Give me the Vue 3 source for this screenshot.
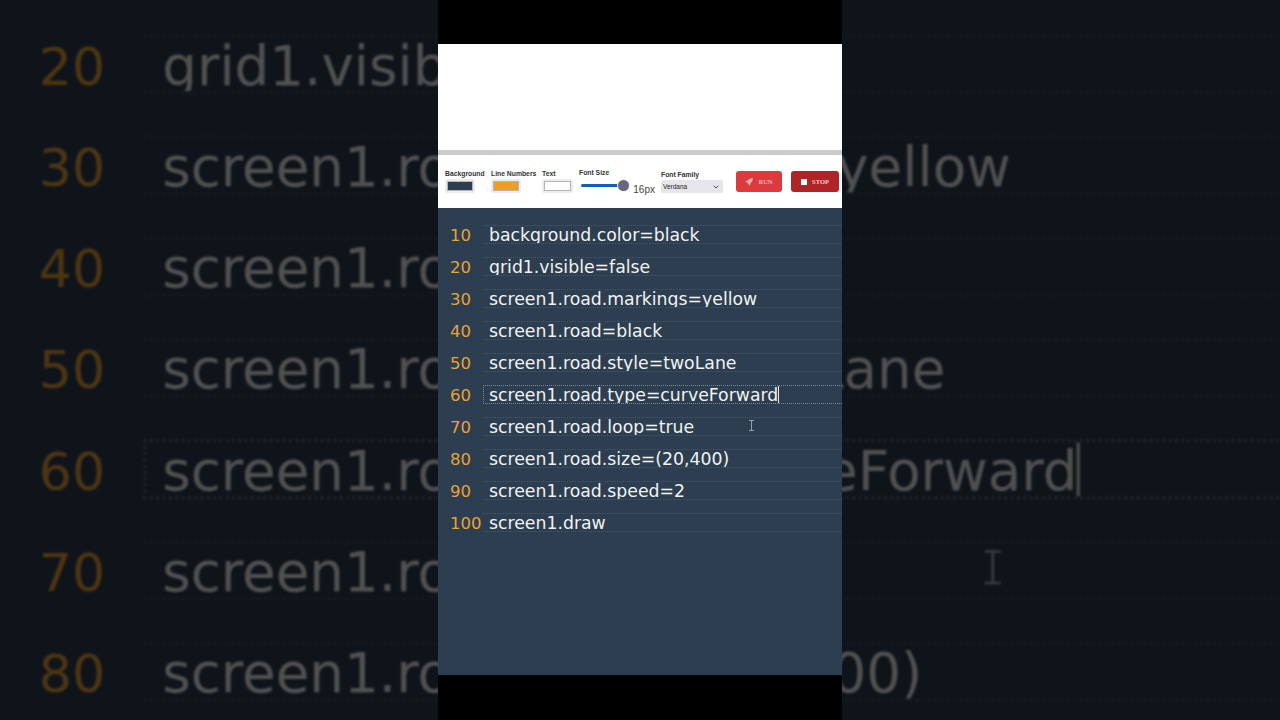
<script setup>
const fields = [
  { label: "Background", swatch: "#2c3e50", width: 39, swatchWidth: 30 },
  { label: "Line Numbers", swatch: "#eba021", width: 45, swatchWidth: 30 },
  { label: "Text", swatch: "#ffffff", width: 31, swatchWidth: 31 },
];

const lines = [
  { num: 10, text: "background.color=black" },
  { num: 20, text: "grid1.visible=false" },
  { num: 30, text: "screen1.road.markings=yellow" },
  { num: 40, text: "screen1.road=black" },
  { num: 50, text: "screen1.road.style=twoLane" },
  { num: 60, text: "screen1.road.type=curveForward", active: true },
  { num: 70, text: "screen1.road.loop=true" },
  { num: 80, text: "screen1.road.size=(20,400)" },
  { num: 90, text: "screen1.road.speed=2" },
  { num: 100, text: "screen1.draw" },
];
</script>

<template>
  <div class="frame">
    <!-- zoomed, darkened copy of the code behind the video column -->
    <div class="backdrop" aria-hidden="true">
      <div class="editor editor-zoomed">
        <div v-for="line in lines" :key="line.num" class="line" :class="{ active: line.active }">
          <span class="num">{{ line.num }}</span>
          <div class="code"><span>{{ line.text }}</span><i v-if="line.active" class="caret"></i></div>
        </div>
        <svg class="ibeam" width="7" height="11" viewBox="0 0 7 11"><path d="M1 .5h5M3.5.5v10M1 10.5h5" stroke="#b4b8bb" stroke-width=".8" fill="none" /></svg>
      </div>
    </div>

    <div class="phone">
      <div class="blank"></div>
      <div class="divider"></div>
      <div class="toolbar">
        <div v-for="f in fields" :key="f.label" class="field" :style="{ width: f.width + 'px' }">
          <label>{{ f.label }}</label>
          <div class="swatch" :style="{ width: f.swatchWidth + 'px' }">
            <div :style="{ background: f.swatch }"></div>
          </div>
        </div>

        <div class="field size">
          <label>Font Size</label>
          <div class="size-row">
            <div class="slider"><div class="knob"></div></div>
            <span class="px">16px</span>
          </div>
        </div>

        <div class="field family">
          <label>Font Family</label>
          <div class="select">
            <span>Verdana</span>
            <svg width="6" height="4" viewBox="0 0 6 4"><path d="M.7.7 3 3l2.3-2.3" stroke="#555" fill="none" /></svg>
          </div>
        </div>

        <button class="btn run">
          <svg width="8" height="8" viewBox="0 0 10 10"><path d="M9.6.4C7.2.2 5 1.1 3.6 3L1.5 3.4.4 5l1.9.2 2.5 2.5.2 1.9 1.6-1.1.4-2.1C8.9 5 9.8 2.8 9.6.4z" fill="#f0b4b6" /></svg>
          RUN
        </button>
        <button class="btn stop">
          <span class="stop-square"></span>
          STOP
        </button>
      </div>

      <div class="editor">
        <div v-for="line in lines" :key="line.num" class="line" :class="{ active: line.active }">
          <span class="num">{{ line.num }}</span>
          <div class="code"><span>{{ line.text }}</span><i v-if="line.active" class="caret"></i></div>
        </div>
        <svg class="ibeam" width="7" height="11" viewBox="0 0 7 11"><path d="M1 .5h5M3.5.5v10M1 10.5h5" stroke="#b4b8bb" stroke-width=".8" fill="none" /></svg>
      </div>
    </div>
  </div>
</template>

<style>
html, body { margin: 0; background: #000; }
</style>

<style scoped>
.frame {
  position: relative;
  width: 1280px;
  height: 720px;
  overflow: hidden;
  background: #0e1419;
  display: flex;
  justify-content: center;
}
.backdrop {
  position: absolute;
  inset: 0;
  overflow: hidden;
}
.editor-zoomed {
  position: absolute;
  left: 438px;
  top: 208px;
  width: 404px;
  height: 467px;
  transform-origin: 202px 152px;
  transform: scale(3.164);
  filter: brightness(0.33) blur(0.3px);
}
.editor-zoomed .code { border-color: #3c4e5f; }
.editor-zoomed .active .code { border-color: #5a6a79; }
.phone {
  position: relative;
  width: 404px;
  height: 720px;
  padding: 44px 0 45px;
  box-sizing: border-box;
  background: #000;
  display: flex;
  flex-direction: column;
}
.blank { height: 106px; background: #fff; }
.divider { height: 5px; background: #ccc; }
.toolbar {
  height: 53px;
  background: #fff;
  display: flex;
  align-items: flex-start;
  gap: 6px;
  padding: 14px 3px 0 7px;
  box-sizing: border-box;
  font-family: "Liberation Sans", Arial, sans-serif;
}
.field { display: flex; flex-direction: column; flex: none; }
.field:first-child { margin-right: 1px; }
.field label {
  font-size: 6.8px;
  font-weight: 700;
  line-height: 9px;
  color: #333;
  white-space: nowrap;
}
.swatch {
  margin-top: 1px;
  height: 14px;
  padding: 2px;
  box-sizing: border-box;
  background: #ececec;
  border-radius: 2px;
}
.swatch div { height: 100%; border: 1px solid #b5b5b5; box-sizing: border-box; }
.field.size { width: 76px; margin-top: -1px; }
.size-row { display: flex; align-items: flex-start; }
.slider {
  position: relative;
  width: 45px;
  height: 3px;
  margin: 7px 0 0 2px;
  border-radius: 2px;
  background: #0f5fc2;
}
.knob {
  position: absolute;
  right: -5px;
  top: -4px;
  width: 11px;
  height: 11px;
  border-radius: 50%;
  background: #66667a;
  box-shadow: 0 0 0 1px #eee;
}
.px { font-size: 10px; line-height: 12px; color: #444; margin: 7px 0 0 9px; }
.field.family { width: 62px; margin: 1px 7px 0 0; }
.select {
  width: 62px;
  height: 13px;
  margin-top: 1px;
  padding: 0 4px 0 2px;
  box-sizing: border-box;
  background: #e6e6ea;
  border-radius: 2px;
  font-size: 6.5px;
  color: #222;
  display: flex;
  align-items: center;
  justify-content: space-between;
}
.btn {
  flex: none;
  height: 21px;
  margin-top: 2px;
  padding: 0;
  border: 0;
  border-radius: 3px;
  font-family: "Liberation Serif", serif;
  font-size: 6.5px;
  font-weight: 700;
  display: flex;
  align-items: center;
  justify-content: center;
  gap: 5px;
}
.run { width: 46px; margin-right: 3px; background: #dc3a3f; color: #f2b8ba; }
.stop { width: 48px; background: #b02428; color: #f0c8c9; }
.stop-square { width: 6px; height: 6px; background: #fff; }

.editor {
  position: relative;
  flex: 1;
  background: #2c3e50;
  padding: 17px 0 0 12px;
  box-sizing: border-box;
  font-family: "DejaVu Sans", Verdana, sans-serif;
  font-size: 17.3px;
}
.line {
  display: flex;
  align-items: center;
  height: 19px;
  margin-bottom: 13px;
}
.num { width: 33px; flex: none; color: #e8a236; font-size: 16.5px; padding-top: 1px; }
.code {
  flex: 1;
  height: 19px;
  line-height: 19px;
  padding-left: 6px;
  overflow: hidden;
  white-space: nowrap;
  color: #f2f2f2;
  border-top: 1px dotted #44566a;
  border-bottom: 1px dotted #44566a;
  box-sizing: border-box;
}
.active .code { border-color: #77889a; border-left: 1px dotted #77889a; padding-left: 5px; }
.caret {
  display: inline-block;
  width: 1px;
  height: 19px;
  vertical-align: -4px;
  background: #e8e8e8;
}
.ibeam { position: absolute; left: 310px; top: 212px; }
</style>
